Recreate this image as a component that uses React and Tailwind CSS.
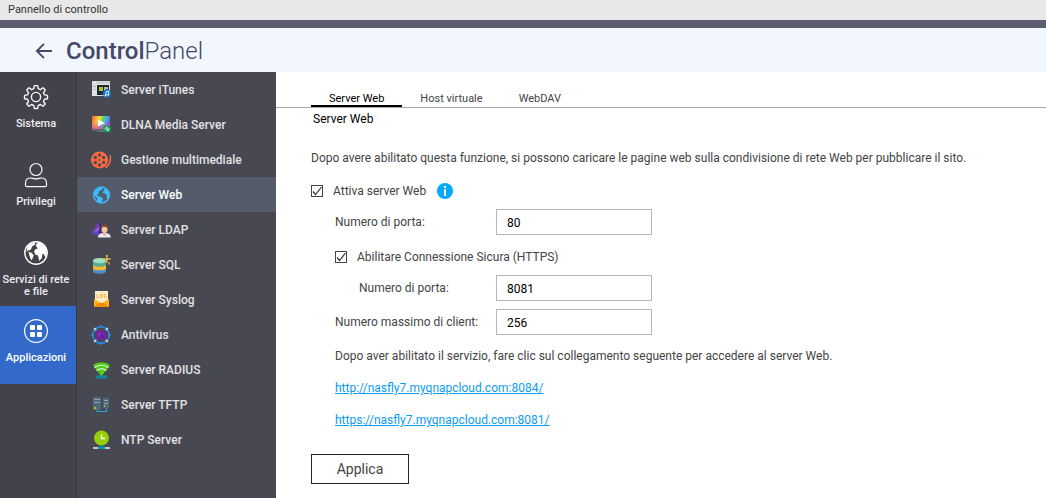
import React from "react";

const ITunesIcon = () => (
  <svg viewBox="0 0 20 20" className="size-5" aria-hidden="true">
    <rect x="1" y="1" width="18" height="15" fill="#dfe1e3" />
    <rect x="1" y="1" width="18" height="3" fill="#cfd1d2" />
    <rect x="2" y="2" width="3" height="1" fill="#fff" />
    <rect x="2" y="6" width="3" height="1" fill="#a9adb2" />
    <rect x="2" y="9" width="3" height="1" fill="#b9bdc2" />
    <rect x="6" y="5" width="12" height="10" fill="#20282c" />
    <rect x="8" y="7" width="4" height="4" fill="#a4c639" />
    <rect x="13" y="7" width="4" height="4" fill="#b9b5a9" />
    <circle cx="16" cy="13.500" r="4.200" fill="#1273d6" />
    <path d="M15 15.400v-3.600l2.700-.6v3.600" fill="none" stroke="#fff" strokeWidth=".9" />
    <circle cx="14.500" cy="15.400" r=".9" fill="#fff" />
    <circle cx="17.100" cy="14.800" r=".9" fill="#fff" />
  </svg>
);

const DlnaIcon = () => (
  <svg viewBox="0 0 20 20" className="size-5" aria-hidden="true">
    <defs>
      <linearGradient id="dlna-rainbow" x1="0" y1="0" x2="1" y2=".25">
        <stop offset="0" stopColor="#f0583a" />
        <stop offset=".28" stopColor="#ffb52a" />
        <stop offset=".45" stopColor="#e9e23c" />
        <stop offset=".62" stopColor="#5fd06a" />
        <stop offset=".82" stopColor="#35b6e6" />
        <stop offset="1" stopColor="#7a5be0" />
      </linearGradient>
      <linearGradient id="dlna-glow" x1="0" y1="0" x2="0" y2="1">
        <stop offset=".4" stopColor="#e04bb0" stopOpacity="0" />
        <stop offset="1" stopColor="#e04bb0" stopOpacity=".85" />
      </linearGradient>
    </defs>
    <rect x="1" y="1" width="18" height="13" fill="url(#dlna-rainbow)" />
    <rect x="1" y="1" width="18" height="13" fill="url(#dlna-glow)" />
    <rect x="1" y="14" width="18" height="2" fill="#5f656c" />
    <rect x="6" y="16" width="8" height="1" fill="#6c7278" />
    <path d="M7 4.500l7 3.500-7 3.500z" fill="#fff" />
    <ellipse cx="16" cy="14" rx="4" ry="3.500" fill="#12a150" />
    <path d="M13.800 14h4.500M14.800 12.600h1.600M16 15.400h1.800" stroke="#e8fff0" strokeWidth="1" />
  </svg>
);

const ReelIcon = () => (
  <svg viewBox="0 0 20 20" className="size-5" aria-hidden="true">
    <path
      fillRule="evenodd"
      fill="#ff6b3d"
      d="M8.500 1.500a8.500 8.500 0 1 1 0 17 8.500 8.500 0 0 1 0-17zM8.500 3.400a1.700 1.700 0 1 0 0 3.400 1.700 1.700 0 0 0 0-3.400zM8.500 13.200a1.700 1.700 0 1 0 0 3.400 1.700 1.700 0 0 0 0-3.400zM4.300 5.800a1.700 1.700 0 1 0 0 3.400 1.700 1.700 0 0 0 0-3.400zM12.700 5.800a1.700 1.700 0 1 0 0 3.400 1.700 1.700 0 0 0 0-3.400zM4.300 10.800a1.700 1.700 0 1 0 0 3.400 1.700 1.700 0 0 0 0-3.400zM12.700 10.800a1.700 1.700 0 1 0 0 3.400 1.700 1.700 0 0 0 0-3.400z"
    />
    <circle cx="8.500" cy="10" r=".9" fill="#484852" />
    <path d="M19.600 5c.2 6-1 10.300-5.200 12.800" fill="none" stroke="#ff6b3d" strokeWidth="1.500" />
  </svg>
);

const WebIcon = () => (
  <svg viewBox="0 0 20 20" className="size-5" aria-hidden="true">
    <circle cx="10.500" cy="10" r="7.900" fill="none" stroke="#3cbcfa" strokeWidth="1.500" />
    <path fill="#3cbcfa" d="M3 8.500C4.500 4 8 2 12.500 2.500L10.500 5 8 6.200 7.600 8.500 6 10.200l1.800 1 2.400.8 1.800 1.700-1.200 3.500-1.500 1.200C6.800 17.500 6 15 6 12.800L3.600 11z" />
    <path fill="#3cbcfa" d="M13.200 3.800l3 1.400 2.400 4.200-.6 3.700-1.500 1.600-1-2.700.3-2-2-1.500-2.300-.4 1-2z" />
  </svg>
);

const LdapIcon = () => (
  <svg viewBox="0 0 20 20" className="size-5" aria-hidden="true">
    <path d="M8 1L0 13.500l8 2.500z" fill="#6a3fb5" />
    <path d="M8 1l5 10.500L8 16z" fill="#46268a" />
    <path d="M4 12l4-3M5.500 9.500L8.500 7" stroke="#b794ec" strokeWidth=".8" />
    <path d="M7 17.500c0-3.200 2.300-4.500 6.200-4.500s6.600 1.300 6.600 4.500z" fill="#e6e9ee" />
    <path d="M12 12.500h3v2l-1.500 1.700-1.500-1.700z" fill="#e8b48a" />
    <ellipse cx="13.500" cy="9.300" rx="3" ry="3.800" fill="#f3c69c" />
    <path d="M10 9c-.4-3 1.200-4.500 3.600-4.500S17.400 6 17 9c-1-1.700-1.800-2.100-3.500-2.100S11 7.300 10 9z" fill="#8a4f2b" />
  </svg>
);

const SqlIcon = () => (
  <svg viewBox="0 0 20 20" className="size-5" aria-hidden="true">
    <path d="M2 12.500v4c0 3 13 3 13 0v-4z" fill="#4d8fce" />
    <path d="M2 9.500v3.700c0 2.800 13 2.800 13 0V9.500z" fill="#f6b92f" />
    <path d="M2 5.500v4.200c0 2.800 13 2.800 13 0V5.500z" fill="#5cae8f" />
    <ellipse cx="8.500" cy="5.700" rx="6.500" ry="2.700" fill="#a3e0c4" />
    <path d="M15.800 0v8M12 4h7.500" stroke="#ffc928" strokeWidth="1.700" strokeDasharray="2 .7" />
    <circle cx="15.800" cy="4" r="1" fill="#fff1a8" />
    <path d="M18 7.500v2" stroke="#ffc928" strokeWidth="1.500" />
  </svg>
);

const SyslogIcon = () => (
  <svg viewBox="0 0 20 20" className="size-5" aria-hidden="true">
    <rect x="4" y="1" width="13" height="12" fill="#ffefc2" />
    <path d="M6 4v3.500h2M9.500 4.500h1.800v3H9.500zM15.200 4.500h-1.700v3h1.700V6" fill="none" stroke="#f6b04a" strokeWidth=".9" />
    <path d="M3 9l7.500 4.500L18 9v8H3z" fill="#ffae19" />
    <path d="M3 17l6-4.500 1.500 1 1.500-1 6 4.500z" fill="#f48a0c" />
  </svg>
);

const AntivirusIcon = () => (
  <svg viewBox="0 0 20 20" className="size-5" aria-hidden="true">
    <circle cx="10" cy="10" r="8.300" fill="none" stroke="#2c8df0" strokeWidth="1.500" />
    <path d="M10 .3v2M10 17.700v2M.3 10h2M17.700 10h2" stroke="#2c8df0" strokeWidth="1.800" />
    <path d="M3 3l2.300 2.300M17 3l-2.300 2.300M3 17l2.300-2.300M17 17l-2.300-2.300" stroke="#dfeefc" strokeWidth="1.300" />
    <circle cx="10" cy="10.300" r="4.600" fill="#7420ac" />
    <circle cx="13.800" cy="7" r="1.500" fill="#7420ac" />
    <circle cx="6.300" cy="7.200" r="1.500" fill="#7420ac" />
    <circle cx="6.300" cy="13.300" r="1.300" fill="#7420ac" />
    <circle cx="14" cy="12.800" r="1.300" fill="#7420ac" />
    <circle cx="8.300" cy="8.800" r="1" fill="#9a49d6" />
    <circle cx="11.500" cy="11.500" r="1" fill="#4f1580" />
  </svg>
);

const RadiusIcon = () => (
  <svg viewBox="0 0 20 20" className="size-5" aria-hidden="true">
    <path d="M2 5.500c4-4.400 13-4.400 17 0L10.500 16z" fill="#4fce16" />
    <path d="M3.500 7.800c4-3.400 10-3.400 14 0M5.600 10.600c2.600-2.400 7.200-2.400 9.800 0" fill="none" stroke="#f2fff0" strokeWidth="1.100" />
    <path d="M5.500 15.500h3l2-1.500 2 1.500h3l1.500 3H4z" fill="#11839b" />
    <path d="M8 13l2.500 3 2.500-3z" fill="#4fce16" />
  </svg>
);

const TftpIcon = () => (
  <svg viewBox="0 0 20 20" className="size-5" aria-hidden="true">
    <rect x="2" y="2" width="8" height="13" fill="#50697a" />
    <path d="M3 4.500h6M3 7.500h6" stroke="#8fa5b1" strokeWidth="1" />
    <rect x="3" y="12" width="2" height="2" fill="#8fd41c" />
    <rect x="12" y="3" width="6" height="10" fill="#50697a" />
    <path d="M13 5.500h4M13 8.500h4" stroke="#8fa5b1" strokeWidth="1" />
    <rect x="13" y="10" width="1" height="2" fill="#8fd41c" />
    <path d="M6 15v1.500h9.500V13" fill="none" stroke="#2ba3de" strokeWidth="1.200" />
  </svg>
);

const NtpIcon = () => (
  <svg viewBox="0 0 20 20" className="size-5" aria-hidden="true">
    <circle cx="10.500" cy="8" r="7.500" fill="#94cf08" />
    <path d="M10.500 4.500v4h3.500" fill="none" stroke="#fff" strokeWidth="1.400" />
    <rect x="2" y="17" width="17" height="2" fill="#c4c8cc" />
    <path d="M9.500 15.500h2v1h2.500V19H7v-2.500h2.500z" fill="#0c93a8" />
  </svg>
);

const GearIcon = () => (
  <svg viewBox="0 0 26 26" className="size-[26px]" fill="none" stroke="#f4f4f6" strokeWidth="1.400" strokeLinejoin="round" aria-hidden="true">
    <circle cx="13" cy="13" r="4.600" />
    <path d="M11.300 1.600h3.400l.5 3 2.300 1 2.500-1.800 2.300 2.300-1.800 2.500 1 2.300 3 .5v3.300l-3 .5-1 2.300 1.800 2.500-2.300 2.300-2.500-1.800-2.300 1-.5 3h-3.400l-.5-3-2.300-1L6 22.300 3.700 20l1.800-2.500-1-2.300-3-.5v-3.300l3-.5 1-2.300L3.700 6.100 6 3.800l2.500 1.800 2.300-1z" />
  </svg>
);

const UserIcon = () => (
  <svg viewBox="0 0 26 26" className="size-[26px]" fill="none" stroke="#f4f4f6" strokeWidth="1.200" aria-hidden="true">
    <circle cx="13" cy="7.500" r="6" />
    <path d="M2.500 23.500v-2.300c0-3.500 2.200-5.200 5-5.200 1.800 0 3 .9 5.500.9s3.700-.9 5.500-.9c2.800 0 5 1.700 5 5.200v2.300c0 .8-.4 1.200-1.200 1.200H3.700c-.8 0-1.200-.4-1.200-1.200z" />
  </svg>
);

const GlobeIcon = () => (
  <svg viewBox="0 0 26 26" className="size-[26px]" aria-hidden="true">
    <circle cx="13" cy="13" r="11.200" fill="none" stroke="#fff" strokeWidth="1.400" />
    <path fill="#fff" d="M4.500 6.500l4-3 4-1L11.500 5 9 6.500 8.200 9 6.500 10.500 5 10.200 3.500 12z" />
    <path fill="#fff" d="M5.500 12l3 .7 2.300 2.500-1 2.500L8.500 20.500 7 17.500z" />
    <path fill="#fff" d="M12.500 5l3-2.700 4.500 2 3 4.700.8 4.500-1.300 4-1.500-3-1.500-1-.7 4.500-2.500 3-1.300-5.500-2.800-1-1.200-3.200 1.800-2.300 2-.5z" />
  </svg>
);

const AppsIcon = () => (
  <svg viewBox="0 0 26 26" className="size-[26px]" fill="#fff" aria-hidden="true">
    <circle cx="13" cy="13" r="11.400" fill="none" stroke="#fff" strokeWidth="1.200" />
    <rect x="7" y="7" width="5" height="5" rx="1" />
    <rect x="14" y="7" width="5" height="5" rx="1" />
    <rect x="7" y="14" width="5" height="5" rx="1" />
    <rect x="14" y="14" width="5" height="5" rx="1" />
  </svg>
);

const sections = [
  { label: "Sistema", Icon: GearIcon },
  { label: "Privilegi", Icon: UserIcon },
  { label: "Servizi di rete e file", Icon: GlobeIcon },
  { label: "Applicazioni", Icon: AppsIcon, active: true },
];

const services = [
  { label: "Server iTunes", Icon: ITunesIcon },
  { label: "DLNA Media Server", Icon: DlnaIcon },
  { label: "Gestione multimediale", Icon: ReelIcon },
  { label: "Server Web", Icon: WebIcon, active: true },
  { label: "Server LDAP", Icon: LdapIcon },
  { label: "Server SQL", Icon: SqlIcon },
  { label: "Server Syslog", Icon: SyslogIcon },
  { label: "Antivirus", Icon: AntivirusIcon },
  { label: "Server RADIUS", Icon: RadiusIcon },
  { label: "Server TFTP", Icon: TftpIcon },
  { label: "NTP Server", Icon: NtpIcon },
];

const tabs = [
  { label: "Server Web", active: true },
  { label: "Host virtuale" },
  { label: "WebDAV" },
];

function CheckOption({ id, label }) {
  return (
    <div className="flex items-center gap-[10px]">
      <span className="grid size-3">
        <input
          id={id}
          type="checkbox"
          defaultChecked
          className="peer col-start-1 row-start-1 size-3 appearance-none border border-[#444]"
        />
        <svg
          viewBox="0 0 12 12"
          className="pointer-events-none invisible col-start-1 row-start-1 size-3 peer-checked:visible"
          fill="none"
          stroke="#333"
          strokeWidth="1.200"
          aria-hidden="true"
        >
          <path d="M2 6.500L4.500 9.500 10.500 2" />
        </svg>
      </span>
      <label htmlFor={id}>{label}</label>
    </div>
  );
}

function NumberField({ id, label, value, nested }) {
  return (
    <div className="flex items-center">
      <label htmlFor={id} className={nested ? "w-[161px] shrink-0 pl-6" : "w-[161px] shrink-0"}>
        {label}
      </label>
      <input
        id={id}
        type="text"
        inputMode="numeric"
        defaultValue={value}
        className="h-[26px] w-[156px] border border-[#b5b5b5] px-[10px] pt-[2px] text-black"
      />
    </div>
  );
}

export default function App() {
  return (
    <div className="flex min-h-screen flex-col bg-white font-['Roboto',sans-serif] text-xs leading-4 text-[#444]">
      <div className="flex h-5 items-center bg-[#e8e8e8] px-2 text-[11px] text-[#333]">Pannello di controllo</div>
      <header className="flex h-[52px] items-center gap-[13px] border-t-8 border-[#5b5c70] bg-[#f2f6ff] px-[35px] pt-px text-[#454766]">
        <button type="button" aria-label="Indietro">
          <svg viewBox="0 0 18 18" className="size-[18px]" fill="none" stroke="currentColor" strokeWidth="1.800" aria-hidden="true">
            <path d="M17 9H2M9 1.800L1.800 9 9 16.200" />
          </svg>
        </button>
        <h1 className="text-2xl font-light">
          <span className="font-medium">Control</span>Panel
        </h1>
      </header>

      <div className="flex flex-1">
        <nav aria-label="Sezioni" className="w-[77px] shrink-0 border-r border-[#38383f] bg-[#42424b] text-[11px] leading-3 font-medium text-[#ededf0]">
          {sections.map(({ label, Icon, active }) => (
            <button
              key={label}
              type="button"
              className={
                active
                  ? "flex h-[78px] w-full flex-col items-center gap-2 bg-[#3369cb] pt-3 pr-1 text-white"
                  : "flex h-[78px] w-full flex-col items-center gap-2 pt-3 pr-1"
              }
            >
              <Icon />
              <span>{label}</span>
            </button>
          ))}
        </nav>

        <nav aria-label="Applicazioni" className="w-[199px] shrink-0 bg-[#484852] font-medium text-[#e2e2e4]">
          {services.map(({ label, Icon, active }) => (
            <a
              key={label}
              href="#"
              className={
                active
                  ? "flex h-[35px] items-center gap-[10px] bg-[#545c6c] px-[14px] text-white"
                  : "flex h-[35px] items-center gap-[10px] px-[14px]"
              }
            >
              <Icon />
              {label}
            </a>
          ))}
        </nav>

        <main className="min-w-0 flex-1">
          <div role="tablist" className="flex h-9 items-end border-b border-[#a6a6a6] pl-[35px] text-[11px] leading-3">
            {tabs.map(({ label, active }) => (
              <button
                key={label}
                type="button"
                role="tab"
                aria-selected={!!active}
                className={
                  active
                    ? "border-b-2 border-black px-[18px] text-black"
                    : "border-b-2 border-transparent px-[18px]"
                }
              >
                {label}
              </button>
            ))}
          </div>

          <form className="px-[35px] pt-[3px]">
            <h2 className="pl-[2px] text-black">Server Web</h2>
            <p className="mt-[23px]">
              Dopo avere abilitato questa funzione, si possono caricare le pagine web sulla condivisione di rete Web per pubblicare il sito.
            </p>
            <div className="mt-[17px] flex items-center gap-[11px]">
              <CheckOption id="enable-web" label="Attiva server Web" />
              <svg viewBox="0 0 16 16" className="size-4" role="img" aria-label="Informazioni">
                <circle cx="8" cy="8" r="8" fill="#00a8ff" />
                <rect x="7" y="3" width="2" height="2" fill="#fff" />
                <rect x="7" y="6" width="2" height="7" fill="#fff" />
              </svg>
            </div>
            <div className="flex flex-col pl-6">
              <div className="mt-[10px]">
                <NumberField id="http-port" label="Numero di porta:" value="80" />
              </div>
              <div className="mt-[14px]">
                <CheckOption id="enable-https" label="Abilitare Connessione Sicura (HTTPS)" />
              </div>
              <div className="mt-[10px] flex flex-col gap-2">
                <NumberField id="https-port" label="Numero di porta:" value="8081" nested />
                <NumberField id="max-clients" label="Numero massimo di client:" value="256" />
              </div>
              <p className="mt-[13px]">
                Dopo aver abilitato il servizio, fare clic sul collegamento seguente per accedere al server Web.
              </p>
              <div className="mt-4 flex flex-col items-start gap-4 text-[#0d9bf2] underline">
                <a href="http://nasfly7.myqnapcloud.com:8084/">http://nasfly7.myqnapcloud.com:8084/</a>
                <a href="https://nasfly7.myqnapcloud.com:8081/">https://nasfly7.myqnapcloud.com:8081/</a>
              </div>
            </div>
            <button type="button" className="mt-[26px] h-[30px] w-[98px] border border-[#222] text-sm">
              Applica
            </button>
          </form>
        </main>
      </div>
    </div>
  );
}
